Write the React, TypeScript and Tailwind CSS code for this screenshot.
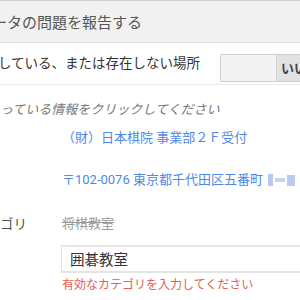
import React from "react";

const jp = "font-['Noto_Sans_CJK_JP',sans-serif]";
const roboto = "font-['Roboto','Noto_Sans_CJK_JP',sans-serif]";

const App = () => {
  return (
    <div className={`w-[300px] h-[300px] overflow-hidden bg-white flex flex-col ${jp}`}>
      {/* Header */}
      <div className="h-[43px] shrink-0 bg-[#f1f1f1] border-t border-[#cfcfcf] border-b border-b-[#dedede] flex items-center">
        <div className="ml-[-8px] whitespace-nowrap text-[15px] text-[#555] leading-none">
          ータの問題を報告する
        </div>
      </div>

      {/* Closed / not existing row */}
      <div className="h-[42px] shrink-0 flex items-start border-b border-[#ebebeb] overflow-hidden">
        <div className="w-[222px] shrink-0 ml-[-2px] mt-[9px] text-[13.5px] leading-[20px] text-[#333] whitespace-nowrap">
          している、または存在しない場所
        </div>
        <div className="mt-[11px] h-[28px] shrink-0 flex border border-[#cdcdcd] rounded-[2px] overflow-hidden">
          <div className="w-[56px] bg-[#f3f3f3] border-r border-[#d0d0d0]" />
          <div className="w-[50px] bg-[#e2e2e2] pl-[4px] text-[13px] font-bold text-[#444] leading-[26px]">
            いいえ
          </div>
        </div>
      </div>

      {/* Hint */}
      <div className="mt-[15px] text-[13px] leading-[18px] italic text-[#777] whitespace-nowrap">
        っている情報をクリックしてください
      </div>

      {/* Name */}
      <div className={`mt-[11px] pl-[62px] text-[13px] leading-[18px] text-[#4f88e6] whitespace-nowrap ${roboto}`}>
        （財）日本棋院 事業部２Ｆ受付
      </div>

      {/* Address */}
      <div className={`mt-[24px] pl-[62px] flex items-center text-[13px] leading-[18px] text-[#4f88e6] whitespace-nowrap ${roboto}`}>
        <span>〒102-0076 東京都千代田区五番町</span>
        <span className="ml-[5px] flex items-center gap-[2px] shrink-0">
          <span className="w-[5px] h-[12px] bg-[#b7c8ef]" />
          <span className="w-[10px] h-[4px] bg-[#c6d3f2]" />
          <span className="w-[8px] h-[11px] bg-[#bccbef]" />
        </span>
      </div>

      {/* Category */}
      <div className="mt-[25px] flex items-center h-[18px]">
        <div className="w-[62px] shrink-0 text-[13.5px] text-[#555] leading-[18px]">ゴリ</div>
        <div className="text-[13px] text-[#9a9a9a] line-through leading-[18px]">将棋教室</div>
      </div>

      <div className="mt-[13px] ml-[61px] h-[28px] shrink-0 border-y-2 border-l border-[#e4e4e4] flex items-center pl-[8px] text-[14.5px] text-[#333]">
        囲碁教室
      </div>

      <div className="mt-[3px] pl-[62px] text-[12px] leading-[16px] text-[#e2604e] whitespace-nowrap">
        有効なカテゴリを入力してください
      </div>
    </div>
  );
};

export default App;
